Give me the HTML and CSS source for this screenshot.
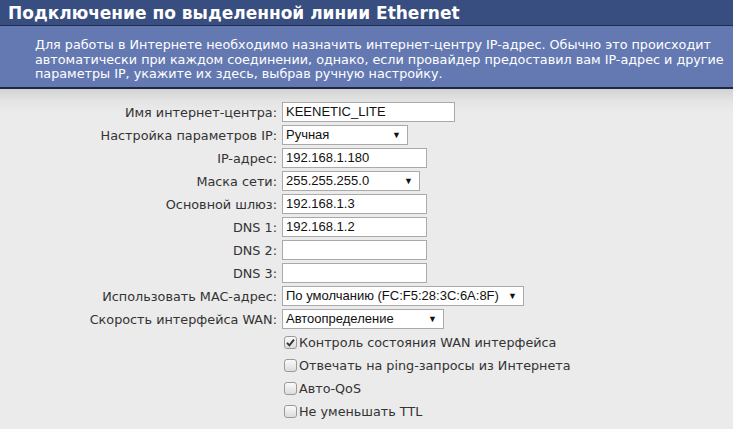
FILE: index.html
```html
<!DOCTYPE html>
<html lang="ru">
<head>
<meta charset="utf-8">
<link rel="stylesheet" href="styles.css">
</head>
<body>
<div class="title">Подключение по выделенной линии Ethernet</div>
<div class="desc">Для работы в Интернете необходимо назначить интернет-центру IP-адрес. Обычно это происходит автоматически при каждом соединении, однако, если провайдер предоставил вам IP-адрес и другие параметры IP, укажите их здесь, выбрав ручную настройку.</div>
<div class="content">
  <div class="form">
    <label class="lbl">Имя интернет-центра:</label>
    <div class="field"><span class="input w173">KEENETIC_LITE</span></div>
    <label class="lbl">Настройка параметров IP:</label>
    <div class="field"><span class="select w126"><span>Ручная</span><i>▼</i></span></div>
    <label class="lbl">IP-адрес:</label>
    <div class="field"><span class="input w145">192.168.1.180</span></div>
    <label class="lbl">Маска сети:</label>
    <div class="field"><span class="select w138"><span>255.255.255.0</span><i>▼</i></span></div>
    <label class="lbl">Основной шлюз:</label>
    <div class="field"><span class="input w145">192.168.1.3</span></div>
    <label class="lbl">DNS 1:</label>
    <div class="field"><span class="input w145">192.168.1.2</span></div>
    <label class="lbl">DNS 2:</label>
    <div class="field"><span class="input w145"></span></div>
    <label class="lbl">DNS 3:</label>
    <div class="field"><span class="input w145"></span></div>
    <label class="lbl">Использовать MAC-адрес:</label>
    <div class="field"><span class="select w242"><span>По умолчанию (FC:F5:28:3C:6A:8F)</span><i>▼</i></span></div>
    <label class="lbl">Скорость интерфейса WAN:</label>
    <div class="field"><span class="select w162"><span>Автоопределение</span><i>▼</i></span></div>
    <div></div>
    <div class="check"><span class="box on"><svg viewBox="0 0 13 13" width="13" height="13"><path d="M3 6.8 L5.4 9.4 L10 3.6" fill="none" stroke="#333" stroke-width="1.9"/></svg></span>Контроль состояния WAN интерфейса</div>
    <div></div>
    <div class="check"><span class="box"></span>Отвечать на ping-запросы из Интернета</div>
    <div></div>
    <div class="check"><span class="box"></span>Авто-QoS</div>
    <div></div>
    <div class="check"><span class="box"></span>Не уменьшать TTL</div>
  </div>
</div>
</body>
</html>
```
FILE: styles.css
```css
html, body {
  margin: 0;
  padding: 0;
}
body {
  width: 733px;
  height: 429px;
  overflow: hidden;
  background: #ebebeb;
  font-family: "DejaVu Sans", Verdana, sans-serif;
}
.title {
  height: 26px;
  box-sizing: border-box;
  padding: 2px 0 0 8px;
  background: #394e80;
  color: #fff;
  font-weight: bold;
  font-size: 17px;
  line-height: 22px;
  border-bottom: 1px solid #1f2b4b;
}
.desc {
  box-sizing: border-box;
  height: 63px;
  padding: 12px 0 0 35px;
  background: #6479b2;
  color: #fff;
  font-size: 12.75px;
  line-height: 14.5px;
  border-bottom: 2px solid #1c2745;
}
.content {
  background: linear-gradient(#d2d2d2 0px, #e4e4e4 12px, #ebebeb 24px);
  padding-top: 13px;
}
.form {
  display: grid;
  grid-template-columns: 277px auto;
  column-gap: 5px;
  grid-auto-rows: 20px;
  row-gap: 3px;
  align-items: center;
}
.lbl {
  text-align: right;
  font-size: 12.8px;
  color: #333;
}
.field {
  display: flex;
}
.input, .select {
  box-sizing: border-box;
  height: 20px;
  background: #fff;
  border: 1px solid #aaa;
  font-family: "Liberation Sans", Arial, sans-serif;
  font-size: 13px;
  color: #111;
  line-height: 18px;
  padding: 0 3px;
}
.select {
  display: flex;
  justify-content: space-between;
  padding: 0 6px 0 3px;
}
.select i {
  font-style: normal;
  font-size: 9px;
  color: #111;
}
.w126 { width: 126px; }
.w138 { width: 138px; }
.w145 { width: 145px; }
.w162 { width: 162px; }
.w173 { width: 173px; }
.w242 { width: 242px; }
.check {
  display: flex;
  align-items: center;
  gap: 2px;
  padding-left: 2px;
  font-size: 12.75px;
  color: #333;
}
.box {
  box-sizing: border-box;
  width: 13px;
  height: 13px;
  border: 1px solid #9a9a9a;
  border-radius: 3px;
  background: linear-gradient(#fafafa, #dcdcdc);
  display: flex;
}
.box svg {
  margin: -1px;
}
```
